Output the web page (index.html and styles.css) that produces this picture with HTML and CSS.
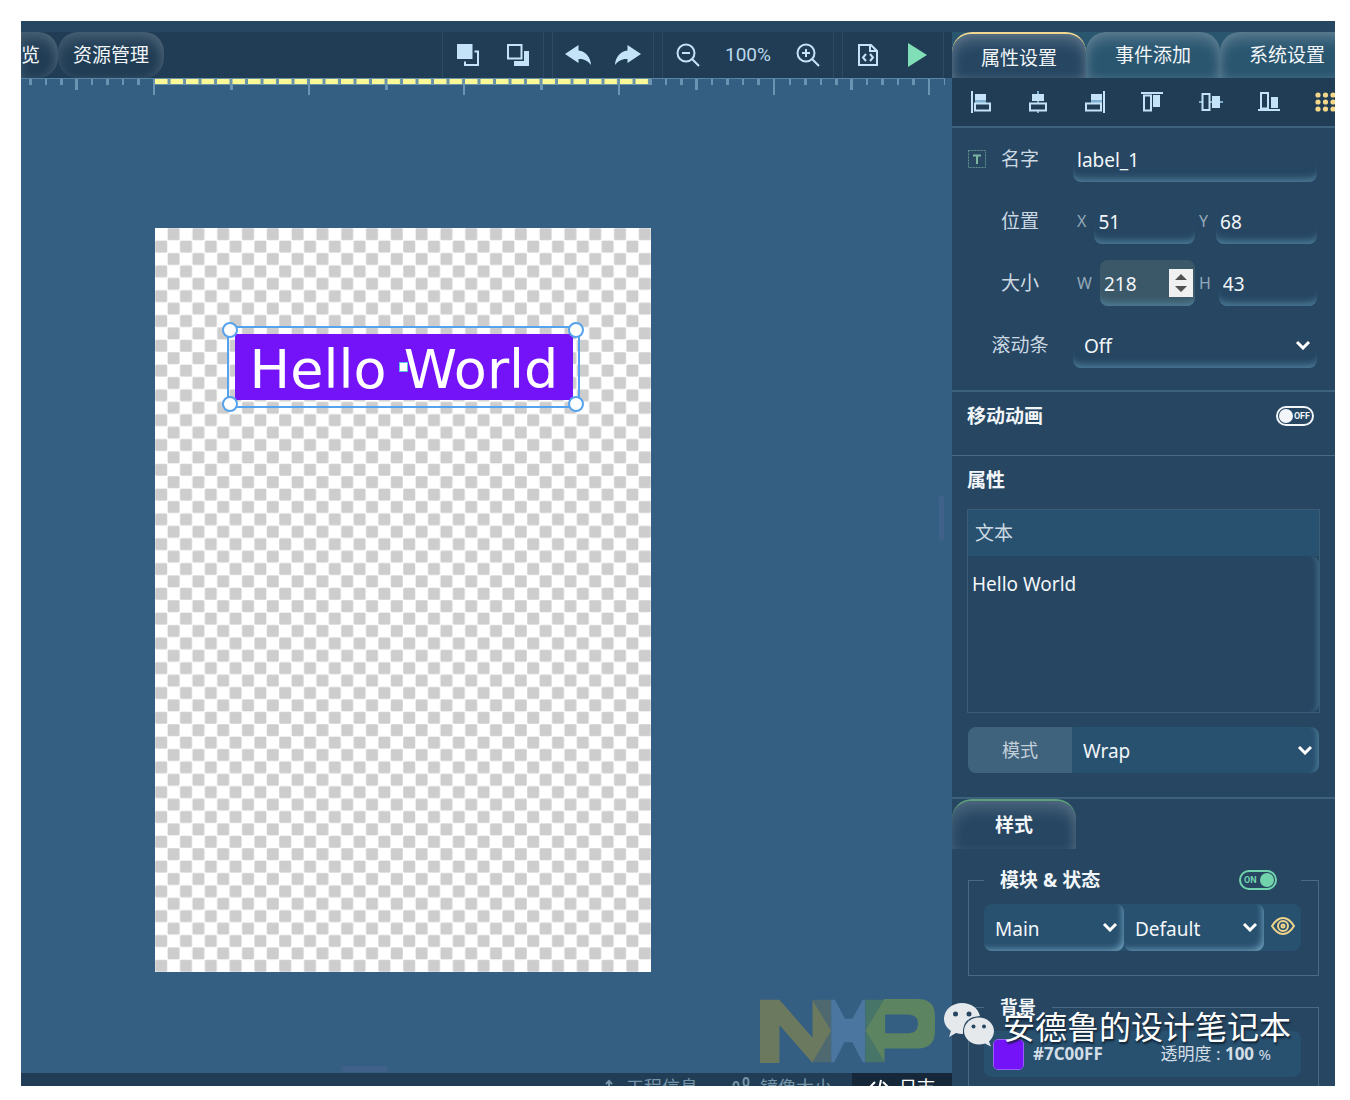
FILE: index.html
```html
<!DOCTYPE html>
<html lang="zh-CN">
<head>
<meta charset="utf-8">
<title>GUI 编辑器</title>
<link rel="stylesheet" href="styles.css">
</head>
<body>
<div class="app">
  <main class="workspace">
    <header class="toolbar">
      <nav class="pages">
        <button class="page-tab page-tab-cut">览</button>
        <button class="page-tab">资源管理</button>
      </nav>
      <div class="tools">
        <div class="group">
          <button class="tool" aria-label="置顶"><svg width="22" height="22" viewBox="0 0 22 22"><path d="M0 0h15.500v15H0z" fill="currentColor"/><path d="M17.500 7.500h3.500V21H8v-3.500" fill="none" stroke="currentColor" stroke-width="2"/></svg></button>
          <button class="tool" aria-label="置底"><svg width="22" height="22" viewBox="0 0 22 22"><path d="M1 1h13.500v13.500H1z" fill="none" stroke="currentColor" stroke-width="2"/><path d="M17 7h5v15H7v-5h10z" fill="currentColor"/></svg></button>
        </div>
        <div class="group">
          <button class="tool" aria-label="撤销"><svg width="26" height="22" viewBox="0 0 26 22"><path d="M13.500 1v5.500C21 7.500 25.500 13 26 21c-3-4-7-6.500-12.500-6V19L0 10z" fill="currentColor"/></svg></button>
          <button class="tool" aria-label="重做"><svg width="26" height="22" viewBox="0 0 26 22"><path d="M12.500 1v5.500C5 7.500.5 13 0 21c3-4 7-6.500 12.500-6V19L26 10z" fill="currentColor"/></svg></button>
        </div>
        <div class="group">
          <button class="tool" aria-label="缩小"><svg width="24" height="24" viewBox="0 0 24 24" fill="none" stroke="currentColor" stroke-width="2"><circle cx="10" cy="10" r="8.500"/><path d="M6 10h8M16 16l7 7"/></svg></button>
          <span class="zoom">100%</span>
          <button class="tool" aria-label="放大"><svg width="24" height="24" viewBox="0 0 24 24" fill="none" stroke="currentColor" stroke-width="2"><circle cx="10" cy="10" r="8.500"/><path d="M6 10h8M10 6v8M16 16l7 7"/></svg></button>
        </div>
        <div class="group">
          <button class="tool" aria-label="生成代码"><svg width="20" height="24" viewBox="0 0 20 24" fill="none" stroke="currentColor" stroke-width="2"><path d="M1 2h12l6 6v14H1zM12 2v6h7"/><path d="M8 11l-3 3.500L8 18M12 11l3 3.500L12 18"/></svg></button>
          <button class="tool run" aria-label="运行"><svg width="20" height="24" viewBox="0 0 20 24"><path d="M0 0l19 12L0 24z" fill="currentColor"/></svg></button>
        </div>
      </div>
    </header>

    <section class="stage">
      <svg class="ruler" width="100%" height="17">
        <defs>
          <pattern id="ticks" x="132" y="0" width="155" height="17" patternUnits="userSpaceOnUse">
            <path d="M0 0h2v17h-2zM16 0h2v7h-2zM31 0h3v7h-3zM47 0h2v7h-2zM62 0h3v7h-3zM77 0h3v12h-3zM93 0h2v7h-2zM108 0h3v7h-3zM124 0h2v7h-2zM139 0h3v7h-3z" fill="#6b93b2"/>
          </pattern>
          <pattern id="dashes" x="134" y="0" width="15.500" height="8" patternUnits="userSpaceOnUse">
            <path d="M0 1h12.500v5H0z" fill="#fbf896"/>
          </pattern>
        </defs>
        <rect width="924" height="17" fill="url(#ticks)"/>
        <rect width="924" height="1" fill="#5685a6"/>
        <rect x="134" width="495" height="7" fill="#6b93a8"/>
        <rect x="134" width="495" height="7" fill="url(#dashes)"/>
      </svg>

      <div class="canvas">
        <svg class="checker" viewBox="0 0 40 60">
          <defs><pattern id="checks" width="2" height="2" patternUnits="userSpaceOnUse"><rect width="2" height="2" fill="#fff"/><rect x="1.020" y=".02" width=".96" height=".96" rx=".1" fill="#cdcdcd"/><rect x=".02" y="1.020" width=".96" height=".96" rx=".1" fill="#cdcdcd"/></pattern></defs>
          <rect width="40" height="60" fill="url(#checks)"/>
        </svg>
        <div class="selection">
          <div class="widget">Hello World</div>
          <i class="handle nw"></i><i class="handle ne"></i><i class="handle sw"></i><i class="handle se"></i>
          <i class="pivot"></i>
        </div>
      </div>
      <i class="grip grip-v"></i>
      <i class="grip grip-h"></i>
      <svg class="brand" viewBox="540 119 523 191" role="img" aria-label="NXP">
        <path d="M540 121h58l99 114V121l56 92-56 97-99-113v113h-58z" fill="#6b795f"/>
        <path d="M697 121h56v92zM697 308l56-95v95z" fill="#4e6a70"/>
        <path d="M753 121h11l30 57h22l31-57h8v187h-8l-31-60h-24l-30 60h-9z" fill="#4b769f"/>
        <path d="M855 121h57l-57 92zM855 213l57 95h-57z" fill="#477567"/>
        <path d="M855 213l57-94h98q53 0 53 51v45q0 52-53 52h-98v41zM914 165v56h71q27 0 27-28t-32-28z" fill="#5d8460" fill-rule="evenodd"/>
      </svg>
    </section>

    <footer class="statusbar">
      <button class="status"><svg width="14" height="16" viewBox="0 0 14 16" fill="none" stroke="currentColor" stroke-width="2"><path d="M7 14V2M4 5l3-3 3 3M1 8v6h12V8"/></svg>工程信息</button>
      <button class="status"><svg width="18" height="20" viewBox="0 0 18 20" fill="none" stroke="currentColor" stroke-width="2"><ellipse cx="4" cy="9" rx="2.500" ry="4"/><ellipse cx="14" cy="5" rx="2.500" ry="4"/><path d="M4 16h9v-5"/></svg>镜像大小</button>
      <button class="status active"><svg width="20" height="16" viewBox="0 0 20 16" fill="none" stroke="currentColor" stroke-width="2"><path d="M6 3L1 8l5 5M12 1L9 15M14 3l5 5-5 5"/></svg>日志</button>
    </footer>
  </main>

  <aside class="panel">
    <nav class="panel-tabs">
      <button class="panel-tab active">属性设置</button>
      <button class="panel-tab">事件添加</button>
      <button class="panel-tab">系统设置</button>
    </nav>
    <div class="aligns">
      <button aria-label="左对齐"><svg width="22" height="22" viewBox="0 0 22 22"><path d="M1 0h2v22H1zM5 3h11v7H5z" fill="#c5e3f8"/><path d="M5 9h11v3H5z" fill="#7fb0d0"/><path d="M5 12.500h15v7H5z" class="line"/></svg></button>
      <button aria-label="水平居中"><svg width="22" height="22" viewBox="0 0 22 22"><path d="M10 0h2v22h-2z" fill="#7fb0d0"/><path d="M5 3h12v7H5z" fill="#c5e3f8"/><path d="M3 12.500h16v7H3z" class="line solid"/></svg></button>
      <button aria-label="右对齐"><svg width="22" height="22" viewBox="0 0 22 22"><path d="M19 0h2v22h-2zM7 3h11v7H7z" fill="#c5e3f8"/><path d="M7 9h11v3H7z" fill="#7fb0d0"/><path d="M2 12.500h15v7H2z" class="line"/></svg></button>
      <button aria-label="顶对齐"><svg width="22" height="22" viewBox="0 0 22 22"><path d="M0 1h22v2H0zM12 4h7v12h-7z" fill="#c5e3f8"/><path d="M3 4.500h7v15H3z" class="line"/></svg></button>
      <button aria-label="垂直居中"><svg width="24" height="22" viewBox="0 0 24 22"><path d="M0 10h24v2H0z" fill="#7fb0d0"/><path d="M13 5h8v12h-8z" fill="#c5e3f8"/><path d="M3.500 3h7v16h-7z" class="line solid"/></svg></button>
      <button aria-label="底对齐"><svg width="22" height="22" viewBox="0 0 22 22"><path d="M0 18h22v2H0zM13 6h7v11h-7z" fill="#c5e3f8"/><path d="M3 2h7v15.500H3z" class="line"/></svg></button>
      <button aria-label="网格"><svg width="20" height="20" viewBox="0 0 20 20" fill="#f3d78a"><circle cx="3" cy="3" r="2.600"/><circle cx="10.500" cy="3" r="2.600"/><circle cx="18" cy="3" r="2.600"/><circle cx="3" cy="10" r="2.600"/><circle cx="10.500" cy="10" r="2.600"/><circle cx="18" cy="10" r="2.600"/><circle cx="3" cy="17" r="2.600"/><circle cx="10.500" cy="17" r="2.600"/><circle cx="18" cy="17" r="2.600"/></svg></button>
    </div>

    <section class="basics">
      <div class="row">
        <div class="caption"><svg width="20" height="20" viewBox="0 0 20 20" fill="none" stroke="#7eb5a0"><path d="M1.500 1.500h17v17h-17z" stroke-dasharray="2 1" opacity=".7"/><path d="M6 6.500h8M10 6.500V15" stroke-width="2"/></svg><label for="name">名字</label></div>
        <input class="field" id="name" value="label_1">
      </div>
      <div class="row">
        <div class="caption"><span></span><span>位置</span></div>
        <div class="pair">
          <label for="x">X</label><input class="field" id="x" type="number" value="51">
        </div>
        <div class="pair">
          <label for="y">Y</label><input class="field" id="y" type="number" value="68">
        </div>
      </div>
      <div class="row">
        <div class="caption"><span></span><span>大小</span></div>
        <div class="pair">
          <label for="w">W</label><input class="field focus" id="w" type="number" value="218">
          <svg class="spin" width="24" height="28" viewBox="0 0 24 28"><path d="M0 0h24v28H0z" fill="#f0f0f0"/><path d="M12 5l6 6H6zM12 23l6-6H6z" fill="#505050"/></svg>
        </div>
        <div class="pair">
          <label for="h">H</label><input class="field" id="h" type="number" value="43">
        </div>
      </div>
      <div class="row">
        <div class="caption"><span></span><label for="scroll">滚动条</label></div>
        <div class="pick">
          <select class="field" id="scroll"><option>Off</option></select>
          <svg class="chevron" width="16" height="10" viewBox="0 0 16 10"><path d="M2 2l6 6 6-6"/></svg>
        </div>
      </div>
    </section>

    <section class="motion">
      <h2>移动动画</h2>
      <label class="toggle"><input type="checkbox" aria-label="移动动画"><span>OFF</span></label>
    </section>

    <section class="props">
      <h2>属性</h2>
      <div class="textbox">
        <label for="text">文本</label>
        <textarea id="text">Hello World</textarea>
      </div>
      <div class="mode">
        <label for="mode">模式</label>
        <div class="pick">
          <select id="mode"><option>Wrap</option></select>
          <svg class="chevron" width="16" height="10" viewBox="0 0 16 10"><path d="M2 2l6 6 6-6"/></svg>
        </div>
      </div>
    </section>

    <section class="styles">
      <button class="style-tab">样式</button>
      <fieldset>
        <legend class="wide">模块 &amp; 状态<label class="toggle on"><span>ON</span><input type="checkbox" checked aria-label="模块与状态"></label></legend>
        <div class="states">
          <div class="pick">
            <select aria-label="模块"><option>Main</option></select>
            <svg class="chevron" width="16" height="10" viewBox="0 0 16 10"><path d="M2 2l6 6 6-6"/></svg>
          </div>
          <div class="pick">
            <select aria-label="状态"><option>Default</option></select>
            <svg class="chevron" width="16" height="10" viewBox="0 0 16 10"><path d="M2 2l6 6 6-6"/></svg>
          </div>
          <button class="eye" aria-label="预览"><svg width="24" height="18" viewBox="0 0 24 18" fill="none" stroke="#f0d48a" stroke-width="2"><path d="M1 9Q6 1 12 1t11 8q-5 8-11 8T1 9z"/><circle cx="12" cy="9" r="5"/><circle cx="12" cy="9" r="1.500"/></svg></button>
        </div>
      </fieldset>
      <fieldset>
        <legend>背景</legend>
        <div class="color">
          <input type="color" value="#7412f8" aria-label="背景颜色">
          <b>#7C00FF</b>
          <span class="alpha">透明度 : <b>100</b> <small>%</small></span>
        </div>
      </fieldset>
    </section>
  </aside>

  <div class="credit">
    <svg width="50" height="44" viewBox="0 0 50 44">
      <path d="M18 0C8 0 0 7 0 16c0 5 3 9 7 12l-2 6 7-4q3 1 7 1Q18 14 36 13C34 5 27 0 18 0z" fill="#e6e9ec"/>
      <path d="M35 14.500c-8 0-15 6-15 13.500s7 13.500 15 13.500q3 0 6-1l6 3-2-5c3-3 5-6 5-10.500 0-7.500-7-13.500-15-13.500z" fill="#e6e9ec"/>
      <circle cx="11.500" cy="11" r="2.500" fill="#264662"/><circle cx="25" cy="11" r="2.500" fill="#264662"/><circle cx="29.500" cy="23.500" r="2" fill="#264662"/><circle cx="40" cy="23.500" r="2" fill="#264662"/>
    </svg>
    <span>安德鲁的设计笔记本</span>
  </div>
</div>
</body>
</html>
```
FILE: styles.css
```css
* { box-sizing: border-box; }

body {
  margin: 0;
  height: 100vh;
  padding: 21px 15px 14px 21px;
  background: #fff;
  color: #f2f6f9;
  font: 19px/26px "Noto Sans", "Noto Sans CJK SC", sans-serif;
}

button, input, select, textarea {
  margin: 0;
  padding: 0;
  border: 0;
  border-radius: 0;
  background: none;
  color: inherit;
  font: inherit;
  outline: none;
}

svg { display: block; flex: none; }
i { display: block; }
h2 { margin: 0; font-size: 19px; line-height: 26px; font-weight: 700; }

.app {
  position: relative;
  display: grid;
  grid-template-columns: minmax(0, 1fr) 383px;
  height: 100%;
  padding-top: 11px;
  overflow: hidden;
  background: #264662;
}

/* Workspace */
.workspace {
  display: flex;
  flex-direction: column;
  min-width: 0;
  min-height: 0;
}

.toolbar {
  display: flex;
  flex: none;
  justify-content: space-between;
  height: 46px;
  background: #203d55;
}

.pages, .tools, .group { display: flex; }

.page-tab {
  padding: 0 15px;
  border-radius: 20px;
  box-shadow: inset 0 8px 14px #ffffff26, inset -4px 0 8px #ffffff14;
}

.page-tab-cut {
  padding: 0 18px 0 0;
  border-radius: 0 20px 20px 0;
}

.tools { gap: 8px; margin-right: 8px; }

.group {
  border: solid #2b4a63;
  border-width: 0 1px;
}

.tool {
  display: grid;
  place-items: center;
  width: 50px;
  color: #c5e3f8;
}

.run { color: #80dfb6; }

.zoom {
  width: 70px;
  color: #bcd9ec;
  font: 19px/46px Roboto, sans-serif;
  text-align: center;
}

.stage {
  position: relative;
  flex: 1;
  min-height: 0;
  overflow: hidden;
  background: #355f82;
}

.canvas {
  position: relative;
  width: 496px;
  margin: 133px 0 0 134px;
}

.checker { width: 100%; }

.selection {
  position: absolute;
  left: 72px;
  top: 98px;
  width: 353px;
  height: 82px;
  padding: 6px;
  border: 2px solid #56a2ec;
}

.widget {
  height: 66px;
  width: 338px;
  background: #7412f8;
  color: #fff;
  font: 54px/72px "DejaVu Sans", sans-serif;
  text-align: center;
  white-space: nowrap;
}

.handle {
  position: absolute;
  width: 16px;
  height: 16px;
  border: 2px solid #56a2ec;
  border-radius: 50%;
  background: #fff;
}

.nw { left: -7px; top: -6px; }
.ne { right: -6px; top: -6px; }
.sw { left: -7px; bottom: -6px; }
.se { right: -6px; bottom: -6px; }

.pivot {
  position: absolute;
  left: 170px;
  top: 34px;
  width: 9px;
  height: 10px;
  border: 1px solid #58c4dc;
  background: #fff;
}

.grip {
  position: absolute;
  border-radius: 3px;
  background: #40618a;
}

.grip-v { right: 8px; top: 417px; width: 5px; height: 46px; }
.grip-h { left: 321px; bottom: 1px; width: 46px; height: 6px; }

.brand {
  position: absolute;
  right: 17px;
  bottom: 10px;
  width: 175px;
}

.statusbar {
  display: flex;
  flex: none;
  justify-content: flex-end;
  align-items: flex-start;
  height: 13px;
  overflow: hidden;
  background: #203d55;
}

.status {
  display: flex;
  align-items: center;
  gap: 10px;
  padding: 0 20px 0 14px;
  color: #7594a8;
  font-size: 18px;
  line-height: 28px;
}

.status.active { background: #152738; color: #fff; padding: 0 17px; }

/* Property panel */
.panel {
  min-width: 0;
  min-height: 0;
  overflow: hidden;
}

.panel-tabs {
  display: flex;
  height: 46px;
  background: #2a5670;
}

.panel-tab {
  flex: none;
  width: 134px;
  border-radius: 20px 20px 0 0;
  box-shadow: inset 0 8px 14px #ffffff30, inset 0 0 10px #ffffff20;
}

.panel-tab.active {
  padding-top: 3px;
  border-top: 2px solid #f0d890;
  background: #264662;
}

.aligns {
  display: flex;
  justify-content: space-between;
  align-items: center;
  height: 50px;
  padding-left: 18px;
  border-bottom: 2px solid #3f627c;
  background: #203d55;
}

.line { fill: none; stroke: #c5e3f8; stroke-width: 2; }
.line.solid { fill: #203d55; }

.basics {
  display: flex;
  flex-direction: column;
  gap: 16px;
  padding: 8px 18px 22px 15px;
  border-bottom: 2px solid #3f627c;
}

.row { display: flex; height: 46px; }

.caption {
  display: grid;
  flex: none;
  grid-template-columns: 1fr auto 1fr;
  align-items: center;
  width: 106px;
  color: #cdd9e2;
}

.field {
  flex: 1;
  min-width: 0;
  width: 100%;
  height: 46px;
  padding: 2px 4px 0;
  border-radius: 8px;
  box-shadow: inset 0 -9px 8px -7px #5487a3;
  appearance: none;
}

.field[type="number"] { appearance: textfield; }
.field::-webkit-inner-spin-button { appearance: none; margin: 0; }
.field.focus { background: #3b5868; }

.pair {
  position: relative;
  display: flex;
  flex: 1;
  align-items: center;
  gap: 8px;
  min-width: 0;
  padding-left: 4px;
  color: #f2f6f9;
}

.pair label { color: #93a9b9; font-size: 16px; }

.spin { position: absolute; right: 2px; top: 9px; }

.pick { position: relative; flex: 1; min-width: 0; }

.pick select {
  width: 100%;
  height: 46px;
  padding: 2px 30px 0 11px;
  appearance: none;
}

.chevron {
  position: absolute;
  right: 6px;
  top: 18px;
  fill: none;
  stroke: #fff;
  stroke-width: 3;
  pointer-events: none;
}

.motion {
  display: flex;
  justify-content: space-between;
  align-items: center;
  height: 64px;
  padding: 0 21px 16px 15px;
  border-bottom: 1px solid #4b6b83;
}

.toggle {
  display: flex;
  align-items: center;
  justify-content: space-between;
  width: 38px;
  height: 20px;
  padding: 0 2px 0 1px;
  border: 2px solid currentColor;
  border-radius: 10px;
  font: 700 9px/16px Roboto, sans-serif;
}

.toggle input {
  flex: none;
  width: 14px;
  height: 14px;
  border-radius: 50%;
  background: currentColor;
  appearance: none;
}

.toggle.on { padding: 0 1px 0 3px; color: #72d4ad; }

.props {
  padding: 11px 15px 24px;
  border-bottom: 2px solid #3f627c;
}

.textbox {
  display: flex;
  flex-direction: column;
  height: 204px;
  margin-top: 16px;
  border: 1px solid #3a5c75;
}

.textbox label {
  padding: 10px 7px;
  background: #28506f;
  color: #cdd9e2;
}

.textbox textarea {
  flex: 1;
  padding: 15px 4px;
  border-radius: 0 8px 8px 0;
  box-shadow: inset -7px 0 6px -6px #47748f;
  resize: none;
}

.mode {
  display: flex;
  height: 46px;
  margin: 14px 1px 0;
  overflow: hidden;
  border-radius: 8px;
  background: #28506f;
}

.mode label {
  width: 104px;
  background: #3f637d;
  color: #c3d0da;
  font-size: 18px;
  line-height: 46px;
  text-align: center;
}

.mode select {
  border-radius: 8px;
  box-shadow: inset -7px 0 6px -6px #5487a3;
}

.style-tab {
  display: block;
  width: 124px;
  height: 50px;
  border-top: 2px solid #5f9f7c;
  border-radius: 20px 20px 0 0;
  box-shadow: inset 0 10px 14px #ffffff26, inset -4px 0 8px #ffffff12;
  font-weight: 700;
}

fieldset {
  min-width: 0;
  margin: 18px 16px 0;
  padding: 11px 17px 24px 15px;
  border: 1px solid #4b6b83;
}

legend {
  display: flex;
  align-items: center;
  justify-content: space-between;
  height: 26px;
  padding: 0 16px;
  font-size: 18px;
  font-weight: 700;
}

.wide { width: 100%; padding-right: 24px; font-size: 19px; }

.states {
  display: flex;
  height: 47px;
  border-radius: 8px;
  background: #28506f;
}

.states select {
  height: 47px;
  border-radius: 8px;
  box-shadow: inset -5px -5px 7px -4px #6fa2be;
}

.eye {
  display: grid;
  place-items: center;
  width: 37px;
  padding-bottom: 3px;
}

.color {
  display: flex;
  align-items: center;
  height: 46px;
  padding: 0 30px 0 9px;
  border-radius: 8px;
  background: #28506f;
  color: #d3dee6;
  font-size: 17px;
}

.color input {
  width: 31px;
  height: 31px;
  margin-right: 9px;
  overflow: hidden;
  border: 1px solid #9b5cf8;
  border-radius: 5px;
  appearance: none;
}

.color input::-webkit-color-swatch-wrapper { padding: 0; }
.color input::-webkit-color-swatch { border: 0; }
.alpha { margin-left: auto; }
.alpha small { font-size: 15px; }

/* Channel signature laid over the lower right corner */
.credit {
  position: absolute;
  right: 44px;
  bottom: 39px;
  display: flex;
  align-items: center;
  gap: 9px;
  color: #fff;
  font: 32px/44px "Noto Sans CJK SC", sans-serif;
  text-shadow: 1px 2px 2px #102030;
  pointer-events: none;
}
```
